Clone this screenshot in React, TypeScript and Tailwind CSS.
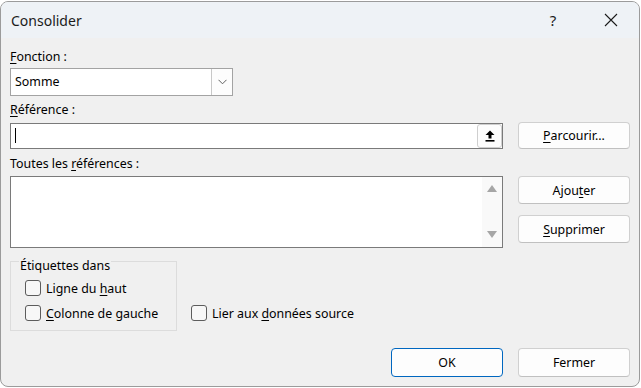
import React from 'react'

const font = { fontFamily: '"Noto Sans", "Segoe UI", sans-serif' }

function Btn({ children, primary }: { children: React.ReactNode; primary?: boolean }) {
  return (
    <div
      className={
        'w-[112px] flex items-center justify-center pt-[2px] rounded-[4px] bg-[#fdfdfd] text-[12.4px] text-black ' +
        (primary ? 'h-[29px] border-[1.5px] border-[#0067c0]' : 'border border-[#d0d0d0] border-b-[#c0c0c0]')
      }
    >
      {children}
    </div>
  )
}

function Check({ children }: { children: React.ReactNode }) {
  return (
    <div className="flex items-center h-[16px]">
      <div className="w-[16px] h-[16px] rounded-[3px] border border-[#5c5c5c] bg-[#f7f7f7]" />
      <span className="ml-[5px] pt-[2px] text-[12.4px] leading-4 text-black">{children}</span>
    </div>
  )
}

export default function App() {
  return (
    <div className="w-[641px] h-[388px] bg-white pt-[1px]" style={font}>
      <div className="w-[640px] h-[386px] rounded-lg border border-[#9b9b9b] bg-[#f0f0f0] overflow-hidden flex flex-col">
        {/* barre de titre */}
        <div className="h-[36px] bg-[#eef2f6] flex items-center pl-[10px]">
          <span className="text-[14px] text-[#1b1b1b] flex-1 pt-[1px]">Consolider</span>
          <span className="text-[15px] text-[#1b1b1b] w-[20px] text-center mr-[41px]">?</span>
          <svg width="14" height="14" viewBox="0 0 14 14" className="mr-[21px]">
            <path d="M1 1 L13 13 M13 1 L1 13" stroke="#1b1b1b" strokeWidth="1.1" />
          </svg>
        </div>

        <div className="pl-[9px] pr-[9px] text-[12.4px] text-black">
          <div className="mt-[11px] leading-4"><u className="underline-offset-2">F</u>onction :</div>
          <div className="mt-[3px] w-[223px] h-[28px] border border-[#a3a3a3] bg-white flex">
            <div className="flex-1 flex items-center pl-[4px] pt-[1px]">Somme</div>
            <div className="w-[21px] h-full border-l border-[#c8c8c8] bg-[#fdfdfd] flex items-center justify-center">
              <svg width="9" height="6" viewBox="0 0 9 6">
                <path d="M0.5 0.8 L4.5 4.8 L8.5 0.8" fill="none" stroke="#606060" strokeWidth="1" />
              </svg>
            </div>
          </div>

          <div className="mt-[6px] leading-4"><u className="underline-offset-2">R</u>éférence :</div>
          <div className="mt-[4px] flex items-center gap-[15px]">
            <div className="w-[493px] h-[26px] border border-[#7a7a7a] bg-white flex items-center">
              <div className="flex-1 pl-[4px] flex items-center">
                <div className="w-[1px] h-[15px] bg-black" />
              </div>
              <div className="w-[25px] h-[24px] rounded-[3px] border border-[#cfcfcf] bg-[#fdfdfd] flex items-center justify-center">
                <svg width="10" height="12" viewBox="0 0 10 12">
                  <path d="M5 0.5 L9.5 5 L6.5 5 L6.5 8.5 L3.5 8.5 L3.5 5 L0.5 5 Z" fill="#000" />
                  <rect x="0.5" y="10" width="9" height="1.6" fill="#000" />
                </svg>
              </div>
            </div>
            <div className="h-[27px] flex">
              <Btn><span><u className="underline-offset-2">P</u>arcourir...</span></Btn>
            </div>
          </div>

          <div className="mt-[7px] leading-4">Toutes les <u className="underline-offset-2">r</u>éférences :</div>
          <div className="mt-[4px] flex gap-[15px]">
            <div className="w-[493px] h-[72px] border border-[#7a7a7a] bg-white flex">
              <div className="flex-1" />
              <div className="w-[20px] h-full bg-[#f9f9f9] flex flex-col items-center justify-between pt-[8px] pb-[9px]">
                <svg width="10" height="7" viewBox="0 0 10 7"><path d="M5 0 L10 7 L0 7 Z" fill="#a6a6a6" /></svg>
                <svg width="10" height="7" viewBox="0 0 10 7"><path d="M0 0 L10 0 L5 7 Z" fill="#a6a6a6" /></svg>
              </div>
            </div>
            <div className="flex flex-col gap-[11px]">
              <div className="h-[28px] flex"><Btn><span>Ajou<u className="underline-offset-2">t</u>er</span></Btn></div>
              <div className="h-[28px] flex"><Btn><span><u className="underline-offset-2">S</u>upprimer</span></Btn></div>
            </div>
          </div>

          <div className="mt-[13px] flex">
            <div className="relative w-[167px] h-[70px] border border-[#dcdcdc] pl-[14px] pt-[18px] flex flex-col gap-[9px]">
              <span className="absolute left-[8px] top-[-4px] leading-4 px-[1px] bg-[#f0f0f0]">Étiquettes dans</span>
              <Check>Ligne du <u className="underline-offset-2">h</u>aut</Check>
              <Check><u className="underline-offset-2">C</u>olonne de gauche</Check>
            </div>
            <div className="ml-[14px] self-end mb-[10px]">
              <Check>Lier aux <u className="underline-offset-2">d</u>onnées source</Check>
            </div>
          </div>

          <div className="mt-[17px] flex justify-end gap-[15px]">
            <div className="h-[29px] flex"><Btn primary>OK</Btn></div>
            <div className="h-[29px] flex"><Btn>Fermer</Btn></div>
          </div>
        </div>
      </div>
    </div>
  )
}
